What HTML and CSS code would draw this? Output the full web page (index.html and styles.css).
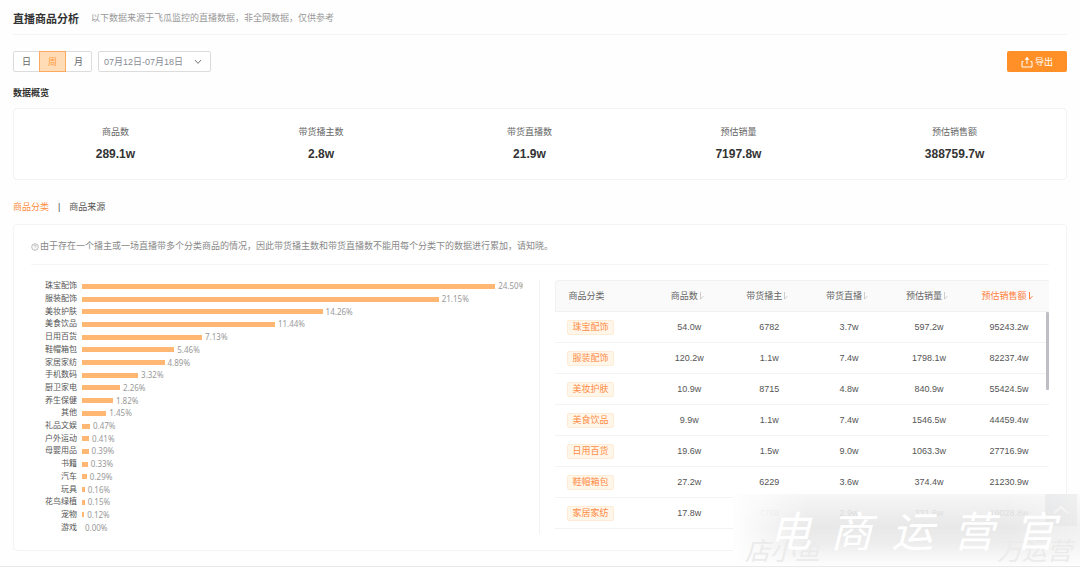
FILE: index.html
```html
<!DOCTYPE html>
<html lang="zh-CN">
<head>
<meta charset="utf-8">
<title>直播商品分析</title>
<link rel="stylesheet" href="styles.css">
</head>
<body>
<main class="page">
  <header class="page-head">
    <h1 class="page-title">直播商品分析</h1>
    <p class="page-sub">以下数据来源于飞瓜监控的直播数据，非全网数据，仅供参考</p>
  </header>

  <div class="toolbar">
    <div class="period" role="group" aria-label="周期">
      <button type="button" class="period-btn">日</button>
      <button type="button" class="period-btn active" aria-pressed="true">周</button>
      <button type="button" class="period-btn">月</button>
    </div>
    <div class="range">
      <select class="range-select" aria-label="日期范围"><option>07月12日-07月18日</option></select>
      <svg class="range-arrow" viewBox="0 0 8 6" aria-hidden="true"><path d="M1 1l3 3.4L7 1"/></svg>
    </div>
    <button type="button" class="export">
      <svg class="export-icon" viewBox="0 0 12 12" aria-hidden="true"><path d="M2.500 5.500h-1.500v5.500h10V5.500h-1.500M6 8V2"/><path class="export-head" d="M6 .8L8.300 3.800H3.700z"/></svg>
      <span>导出</span>
    </button>
  </div>

  <h2 class="section-title">数据概览</h2>
  <dl class="stats">
    <div class="stat"><dt>商品数</dt><dd>289.1w</dd></div>
    <div class="stat"><dt>带货播主数</dt><dd>2.8w</dd></div>
    <div class="stat"><dt>带货直播数</dt><dd>21.9w</dd></div>
    <div class="stat"><dt>预估销量</dt><dd>7197.8w</dd></div>
    <div class="stat"><dt>预估销售额</dt><dd>388759.7w</dd></div>
  </dl>

  <nav class="tabs">
    <a href="#category" class="tab active">商品分类</a>
    <span class="tab-sep">|</span>
    <a href="#source" class="tab">商品来源</a>
  </nav>

  <section class="panel" id="category">
    <p class="note">
      <svg class="note-icon" viewBox="0 0 8 8" aria-hidden="true"><circle cx="4" cy="4" r="3.300"/><path d="M2.900 3.200c0-1.500 2.300-1.400 2.200 0 0 .7-1.100.8-1.100 1.500M4 5.600v.6"/></svg>
      <span>由于存在一个播主或一场直播带多个分类商品的情况，因此带货播主数和带货直播数不能用每个分类下的数据进行累加，请知晓。</span>
    </p>
    <div class="panel-body">
      <ul class="chart">
        <li><span class="name">珠宝配饰</span><span class="track"><i class="bar" style="width:93.6%"></i><span class="pct">24.50%</span></span></li>
        <li><span class="name">服装配饰</span><span class="track"><i class="bar" style="width:80.8%"></i><span class="pct">21.15%</span></span></li>
        <li><span class="name">美妆护肤</span><span class="track"><i class="bar" style="width:54.5%"></i><span class="pct">14.26%</span></span></li>
        <li><span class="name">美食饮品</span><span class="track"><i class="bar" style="width:43.7%"></i><span class="pct">11.44%</span></span></li>
        <li><span class="name">日用百货</span><span class="track"><i class="bar" style="width:27.2%"></i><span class="pct">7.13%</span></span></li>
        <li><span class="name">鞋帽箱包</span><span class="track"><i class="bar" style="width:20.9%"></i><span class="pct">5.46%</span></span></li>
        <li><span class="name">家居家纺</span><span class="track"><i class="bar" style="width:18.7%"></i><span class="pct">4.89%</span></span></li>
        <li><span class="name">手机数码</span><span class="track"><i class="bar" style="width:12.7%"></i><span class="pct">3.32%</span></span></li>
        <li><span class="name">厨卫家电</span><span class="track"><i class="bar" style="width:8.6%"></i><span class="pct">2.26%</span></span></li>
        <li><span class="name">养生保健</span><span class="track"><i class="bar" style="width:7%"></i><span class="pct">1.82%</span></span></li>
        <li><span class="name">其他</span><span class="track"><i class="bar" style="width:5.5%"></i><span class="pct">1.45%</span></span></li>
        <li><span class="name">礼品文娱</span><span class="track"><i class="bar" style="width:1.8%"></i><span class="pct">0.47%</span></span></li>
        <li><span class="name">户外运动</span><span class="track"><i class="bar" style="width:1.6%"></i><span class="pct">0.41%</span></span></li>
        <li><span class="name">母婴用品</span><span class="track"><i class="bar" style="width:1.5%"></i><span class="pct">0.39%</span></span></li>
        <li><span class="name">书籍</span><span class="track"><i class="bar" style="width:1.3%"></i><span class="pct">0.33%</span></span></li>
        <li><span class="name">汽车</span><span class="track"><i class="bar" style="width:1.1%"></i><span class="pct">0.29%</span></span></li>
        <li><span class="name">玩具</span><span class="track"><i class="bar" style="width:0.6%"></i><span class="pct">0.16%</span></span></li>
        <li><span class="name">花鸟绿植</span><span class="track"><i class="bar" style="width:0.6%"></i><span class="pct">0.15%</span></span></li>
        <li><span class="name">宠物</span><span class="track"><i class="bar" style="width:0.5%"></i><span class="pct">0.12%</span></span></li>
        <li><span class="name">游戏</span><span class="track"><i class="bar" style="width:0%"></i><span class="pct">0.00%</span></span></li>
      </ul>
      <div class="table-wrap">
        <table class="table">
          <thead>
            <tr>
              <th class="cat">商品分类</th>
              <th>商品数<svg class="sort" viewBox="0 0 5 8" aria-hidden="true"><path d="M1.500 0v7.200L4.500 4.200"/></svg></th>
              <th>带货播主<svg class="sort" viewBox="0 0 5 8" aria-hidden="true"><path d="M1.500 0v7.200L4.500 4.200"/></svg></th>
              <th>带货直播<svg class="sort" viewBox="0 0 5 8" aria-hidden="true"><path d="M1.500 0v7.200L4.500 4.200"/></svg></th>
              <th>预估销量<svg class="sort" viewBox="0 0 5 8" aria-hidden="true"><path d="M1.500 0v7.200L4.500 4.200"/></svg></th>
              <th class="sorted">预估销售额<svg class="sort" viewBox="0 0 5 8" aria-hidden="true"><path d="M1.500 0v7.200L4.500 4.200"/></svg></th>
            </tr>
          </thead>
          <tbody>
            <tr><td class="cat"><span class="tag">珠宝配饰</span></td><td>54.0w</td><td>6782</td><td>3.7w</td><td>597.2w</td><td>95243.2w</td></tr>
            <tr><td class="cat"><span class="tag">服装配饰</span></td><td>120.2w</td><td>1.1w</td><td>7.4w</td><td>1798.1w</td><td>82237.4w</td></tr>
            <tr><td class="cat"><span class="tag">美妆护肤</span></td><td>10.9w</td><td>8715</td><td>4.8w</td><td>840.9w</td><td>55424.5w</td></tr>
            <tr><td class="cat"><span class="tag">美食饮品</span></td><td>9.9w</td><td>1.1w</td><td>7.4w</td><td>1546.5w</td><td>44459.4w</td></tr>
            <tr><td class="cat"><span class="tag">日用百货</span></td><td>19.6w</td><td>1.5w</td><td>9.0w</td><td>1063.3w</td><td>27716.9w</td></tr>
            <tr><td class="cat"><span class="tag">鞋帽箱包</span></td><td>27.2w</td><td>6229</td><td>3.6w</td><td>374.4w</td><td>21230.9w</td></tr>
            <tr><td class="cat"><span class="tag">家居家纺</span></td><td>17.8w</td><td>4768</td><td>2.9w</td><td>331.6w</td><td>19028.8w</td></tr>
          </tbody>
        </table>
        <span class="scroll-thumb"></span>
      </div>
    </div>
  </section>

  <button type="button" class="to-top" aria-label="返回顶部">
    <svg class="to-top-icon" viewBox="0 0 16 8" aria-hidden="true"><path d="M1 7l7-6 7 6"/></svg>
  </button>
  <div class="watermark">
    <div class="mark-sub"><span>店小鱼</span><span>万运营</span></div>
    <div class="mark-main"><span>电</span><span>商</span><span>运</span><span>营</span><span>官</span></div>
  </div>
</main>
</body>
</html>
```
FILE: styles.css
```css
* { box-sizing: border-box; }

body {
  margin: 0;
  background: #fefefe;
  color: #555;
  font: 9px/13px "Liberation Sans", "Noto Sans CJK SC", sans-serif;
}

h1, h2, p, dl, dd, ul { margin: 0; padding: 0; }

button, select { font: inherit; }

.page {
  position: relative;
  padding: 0 13px 15px;
  border-bottom: 1px solid #e9e9e9;
}

.page-head {
  display: flex;
  align-items: center;
  gap: 12px;
  height: 35px;
  padding-top: 3px;
  border-bottom: 1px solid #f5f5f5;
}

.page-title {
  color: #333;
  font-size: 11px;
  line-height: 16px;
}

.page-sub { color: #999; }

.toolbar {
  display: flex;
  align-items: center;
  padding-top: 16px;
}

.period { display: flex; }

.period-btn {
  width: 27px;
  height: 21px;
  padding: 1px 0 0;
  border: 1px solid #dcdcdc;
  background: #fff;
  color: #666;
}

.period-btn + .period-btn { margin-left: -1px; }
.period-btn:first-child { border-radius: 2px 0 0 2px; }
.period-btn:last-child { border-radius: 0 2px 2px 0; }

.period-btn.active {
  z-index: 1;
  border-color: #fbab60;
  background: #ffdcb5;
  color: #ff9a3c;
}

.range {
  position: relative;
  margin-left: 6px;
}

.range-select {
  width: 113px;
  height: 21px;
  padding: 1px 5px 0;
  appearance: none;
  border: 1px solid #dcdcdc;
  border-radius: 2px;
  background: #fff;
  color: #888b94;
}

.range-arrow {
  position: absolute;
  top: 8px;
  right: 9px;
  width: 8px;
  height: 6px;
  fill: none;
  stroke: #777;
  pointer-events: none;
}

.export {
  display: flex;
  align-items: center;
  justify-content: center;
  gap: 2px;
  width: 60px;
  height: 21px;
  margin-left: auto;
  padding: 1px 0 0;
  border: 0;
  border-radius: 2px;
  background: #ff9027;
  color: #fff;
}

.export-icon {
  width: 12px;
  height: 12px;
  fill: none;
  stroke: #fff;
}

.export-head {
  fill: #fff;
  stroke: none;
}

.section-title {
  padding: 15px 0 8px;
  color: #333;
  font-size: 9px;
  line-height: 13px;
}

.stats {
  display: flex;
  justify-content: space-around;
  padding: 17px 0;
  border: 1px solid #f3f3f3;
  border-radius: 4px;
  background: #fff;
  text-align: center;
}

.stat dt { color: #666; }

.stat dd {
  padding-top: 7px;
  color: #333;
  font-size: 12px;
  font-weight: bold;
  line-height: 16px;
}

.tabs {
  display: flex;
  gap: 9px;
  padding: 21px 0 10px;
}

.tab {
  color: #555;
  text-decoration: none;
}

.tab.active { color: #ff8d42; }

.panel {
  padding: 15px 17px 16px;
  border: 1px solid #f3f3f3;
  border-radius: 4px;
  background: #fff;
}

.note {
  display: flex;
  align-items: center;
  gap: 1px;
  padding-bottom: 11px;
  border-bottom: 1px solid #f5f5f5;
  color: #888;
}

.note-icon {
  width: 8px;
  height: 8px;
  fill: none;
  stroke: #aaa;
  stroke-width: 0.8;
}

.panel-body {
  display: grid;
  grid-template-columns: 510fr 494fr;
  gap: 15px;
  padding-top: 15px;
}

.chart {
  display: grid;
  grid-auto-rows: 1fr;
  height: 254px;
  padding-right: 16px;
  border-right: 1px solid #f3f3f3;
  font-size: 8px;
  line-height: 12px;
  list-style: none;
}

.chart li {
  display: grid;
  grid-template-columns: 46px 1fr;
  align-items: center;
  gap: 5px;
}

.name { text-align: right; }

.track {
  display: flex;
  align-items: center;
  gap: 3px;
  min-width: 0;
  overflow: hidden;
}

.bar {
  flex: none;
  height: 5px;
  background: #ffb773;
}

.pct {
  color: #999;
  font-family: "Noto Sans", "Open Sans", sans-serif;
}

.table-wrap { position: relative; }

.table {
  width: 100%;
  table-layout: fixed;
  border-collapse: separate;
  border-spacing: 0;
  text-align: center;
}

.table th {
  height: 32px;
  padding: 0 4px 0 0;
  border-top: 1px solid #f1f1f1;
  border-bottom: 1px solid #f1f1f1;
  background: #fafafa;
  color: #666;
  font-weight: normal;
}

.table td {
  height: 31px;
  padding: 0;
  border-bottom: 1px solid #f3f3f3;
}

.table .cat {
  width: 19%;
  padding-left: 12px;
  text-align: left;
}

.table th.cat {
  border-left: 1px solid #f1f1f1;
  border-top-left-radius: 4px;
}

.table .sorted { color: #ff8040; }

.sort {
  width: 5px;
  height: 8px;
  margin-left: 1px;
  vertical-align: middle;
  fill: none;
  stroke: #ccc;
}

.sorted .sort { stroke: #ff8040; }

.tag {
  display: inline-block;
  padding: 0 4px;
  border: 1px solid #ffecd6;
  border-radius: 2px;
  background: #fff6ea;
  color: #ff8c45;
}

.scroll-thumb {
  position: absolute;
  top: 32px;
  right: 0;
  width: 3px;
  height: 78px;
  border-radius: 1px;
  background: #bebec4;
}

.to-top {
  position: absolute;
  right: 3px;
  bottom: 40px;
  display: flex;
  align-items: center;
  justify-content: center;
  width: 32px;
  height: 32px;
  padding: 0;
  border: 0;
  background: #8f949e;
}

.to-top-icon {
  width: 16px;
  height: 8px;
  fill: none;
  stroke: #fff;
  stroke-width: 2;
}

/* Brand mark laid over the lower right corner */
.watermark {
  position: absolute;
  right: 0;
  bottom: 0;
  width: 347px;
  height: 72px;
  background:
    linear-gradient(90deg, #fefefe 0, rgba(254, 254, 254, 0) 22%, rgba(254, 254, 254, 0) 78%, rgba(254, 254, 254, 0.4) 100%),
    linear-gradient(180deg, rgba(245, 245, 245, 0.86) 0, rgba(230, 230, 230, 0.91) 45%, rgba(236, 236, 236, 0.95) 68%, #fdfdfd 100%);
}

.mark-main {
  position: relative;
  display: flex;
  justify-content: space-between;
  padding: 12px 24px 0 36px;
  color: #fff;
  font-family: "Noto Sans CJK SC", sans-serif;
  font-size: 42px;
  font-style: italic;
  line-height: 46px;
}

.mark-sub {
  position: absolute;
  right: 8px;
  bottom: 2px;
  left: 12px;
  display: flex;
  justify-content: space-between;
  color: #ebebeb;
  font-size: 25px;
  font-style: italic;
  line-height: 26px;
}
```
